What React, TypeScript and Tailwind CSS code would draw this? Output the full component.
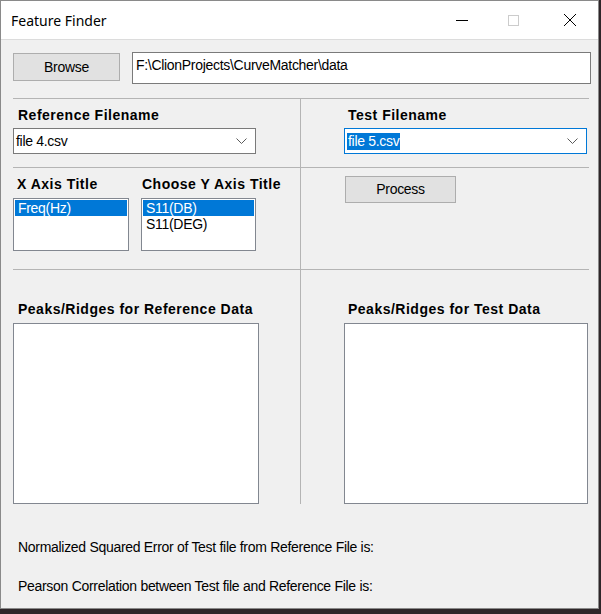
import React from "react";

const ui = { fontFamily: '"Liberation Sans", Arial, sans-serif' };

const Chevron = () => (
  <svg width="11" height="7" viewBox="0 0 11 7" className="shrink-0">
    <polyline points="0.5,0.5 5.5,5.5 10.5,0.5" fill="none" stroke="#5a5a5a" strokeWidth="1" />
  </svg>
);

const Combo = ({ value, focused }: { value: string; focused?: boolean }) => (
  <div
    className={
      "flex items-center justify-between w-[243px] h-[26px] bg-white border pl-[2px] pr-[8px] text-[14px] tracking-[-0.3px] text-black " +
      (focused ? "border-[#0078d7]" : "border-[#7a7a7a]")
    }
  >
    {focused ? (
      <span className="bg-[#0078d7] text-white leading-[17px] px-[1px]">{value}</span>
    ) : (
      <span className="leading-[17px]">{value}</span>
    )}
    <Chevron />
  </div>
);

const ListBox = ({ items, width }: { items: string[]; width: string }) => (
  <div className={"h-[53px] bg-white border border-[#828790] p-[1px] text-[14px] tracking-[-0.3px] " + width}>
    {items.map((it, i) => (
      <div
        key={it}
        className={"h-[16px] leading-[16px] pl-[3px] " + (i === 0 ? "bg-[#0078d7] text-white" : "text-black")}
      >
        {it}
      </div>
    ))}
  </div>
);

const Label = ({ children, className = "" }: { children: React.ReactNode; className?: string }) => (
  <div className={"h-[16px] leading-[16px] text-[14px] tracking-[0.5px] font-bold text-black " + className}>
    {children}
  </div>
);

const WinButton = ({ children, className = "" }: { children: React.ReactNode; className?: string }) => (
  <div
    className={
      "flex items-center justify-center bg-[#e1e1e1] border border-[#adadad] text-[14px] tracking-[-0.3px] text-black " +
      className
    }
  >
    {children}
  </div>
);

export default function App() {
  return (
    <div className="w-[601px] h-[614px] bg-[#2e2629] overflow-hidden" style={ui}>
      <div className="w-[599px] h-[609px] border border-[#8a8a8a] bg-[#f0f0f0] flex flex-col">
        {/* title bar */}
        <div className="h-[39px] bg-white flex items-center border-b border-[#dcdcdc] shrink-0">
          <div className="pl-[10px] text-[14px] text-black" style={{ fontFamily: '"Noto Sans", "Open Sans", sans-serif' }}>
            Feature Finder
          </div>
          <div className="ml-auto flex items-center h-full">
            <div className="w-[46px] h-full flex items-center justify-center">
              <div className="w-[12px] h-px bg-black" />
            </div>
            <div className="w-[56px] h-full flex items-center justify-center">
              <div className="w-[11px] h-[11px] border border-[#cccccc]" />
            </div>
            <div className="w-[57px] h-full flex items-center justify-center">
              <svg width="14" height="14" viewBox="0 0 14 14">
                <path d="M1 1 L13 13 M13 1 L1 13" stroke="#000" strokeWidth="1" />
              </svg>
            </div>
          </div>
        </div>

        {/* path row */}
        <div className="flex mt-[12px] pl-[12px]">
          <WinButton className="w-[107px] h-[28px] mt-[1px]">Browse</WinButton>
          <div className="ml-[12px] w-[459px] h-[32px] bg-white border border-[#7a7a7a] pl-[3px] pt-[4px] text-[14px] tracking-[-0.3px] leading-[16px] text-black">
            F:\ClionProjects\CurveMatcher\data
          </div>
        </div>

        <div className="mx-[12px] mt-[14px] w-[576px]">
          {/* filenames */}
          <div className="grid grid-cols-[288px_1fr] border-t border-[#b4b4b4] h-[69px]">
            <div className="border-r border-[#b4b4b4] pt-[8px]">
              <Label className="pl-[5px]">Reference Filename</Label>
              <div className="mt-[5px]">
                <Combo value="file 4.csv" />
              </div>
            </div>
            <div className="pt-[8px] pl-[43px]">
              <Label className="pl-[4px]">Test Filename</Label>
              <div className="mt-[5px]">
                <Combo value="file 5.csv" focused />
              </div>
            </div>
          </div>

          {/* axis titles */}
          <div className="grid grid-cols-[288px_1fr] border-t border-[#b4b4b4] h-[102px]">
            <div className="border-r border-[#b4b4b4] pt-[8px] flex gap-[12px]">
              <div>
                <Label className="pl-[4px]">X Axis Title</Label>
                <div className="mt-[6px]">
                  <ListBox items={["Freq(Hz)"]} width="w-[116px]" />
                </div>
              </div>
              <div>
                <Label className="pl-[1px]">Choose Y Axis Title</Label>
                <div className="mt-[6px]">
                  <ListBox items={["S11(DB)", "S11(DEG)"]} width="w-[115px]" />
                </div>
              </div>
            </div>
            <div className="pt-[8px] pl-[44px]">
              <WinButton className="w-[111px] h-[27px]">Process</WinButton>
            </div>
          </div>

          {/* peaks */}
          <div className="grid grid-cols-[288px_1fr] border-t border-[#b4b4b4]">
            <div className="border-r border-[#b4b4b4] pt-[31px]">
              <Label className="pl-[5px]">Peaks/Ridges for Reference Data</Label>
              <div className="mt-[6px] w-[246px] h-[181px] bg-white border border-[#828790]" />
            </div>
            <div className="pt-[31px] pl-[43px]">
              <Label className="pl-[4px]">Peaks/Ridges for Test Data</Label>
              <div className="mt-[6px] w-[244px] h-[181px] bg-white border border-[#828790]" />
            </div>
          </div>
        </div>

        {/* results */}
        <div className="pl-[17px] text-[14px] tracking-[-0.3px] text-black leading-[16px]">
          <div className="mt-[35px]">Normalized Squared Error of Test file from Reference File is:</div>
          <div className="mt-[23px]">Pearson Correlation between Test file and Reference File is:</div>
        </div>
      </div>
    </div>
  );
}
